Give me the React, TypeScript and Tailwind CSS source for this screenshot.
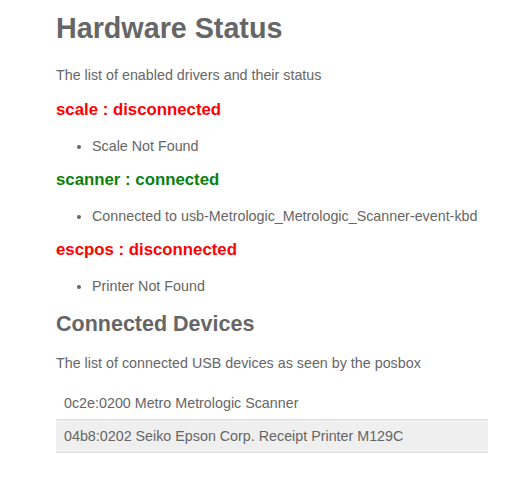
const drivers = [
  { name: 'scale', status: 'disconnected', messages: ['Scale Not Found'] },
  {
    name: 'scanner',
    status: 'connected',
    messages: ['Connected to usb-Metrologic_Metrologic_Scanner-event-kbd'],
  },
  { name: 'escpos', status: 'disconnected', messages: ['Printer Not Found'] },
];

const devices = [
  '0c2e:0200 Metro Metrologic Scanner',
  '04b8:0202 Seiko Epson Corp. Receipt Printer M129C',
];

const App = () => {
  return (
    <div
      className="min-h-[504px] bg-white text-[#666666]"
      style={{ fontFamily: '"Liberation Sans", Arial, sans-serif' }}
    >
      <div className="w-[432px] ml-[56px] pt-[11px] pb-10">
        <h1 className="text-[28.7px] leading-[34px] font-bold">Hardware Status</h1>
        <p className="mt-[20px] text-[14.3px] leading-[20px]">
          The list of enabled drivers and their status
        </p>
        {drivers.map((d, i) => (
          <div key={d.name}>
            <h3
              className={
                'text-[16.8px] leading-[20px] font-bold ' +
                (i === 0 ? 'mt-[15px] ' : 'mt-[14px] ') +
                (d.status === 'connected' ? 'text-[#0b7f0b]' : 'text-[#ff0000]')
              }
            >
              {d.name} : {d.status}
            </h3>
            <ul className="mt-[16px] list-disc pl-[36px] text-[14.3px] leading-[20px]">
              {d.messages.map((m) => (
                <li key={m}>{m}</li>
              ))}
            </ul>
          </div>
        ))}
        <h2 className="mt-[15px] text-[21.5px] leading-[26px] font-bold">Connected Devices</h2>
        <p className="mt-[16px] text-[14.3px] leading-[20px]">
          The list of connected USB devices as seen by the posbox
        </p>
        <div className="mt-[13px] text-[14.3px] leading-[20px]">
          <div className="h-[33px] px-2 flex items-center">{devices[0]}</div>
          <div className="h-[34px] px-2 flex items-center bg-[#efefef] border-y border-[#dddddd]">
            {devices[1]}
          </div>
        </div>
      </div>
    </div>
  );
};

export default App;
